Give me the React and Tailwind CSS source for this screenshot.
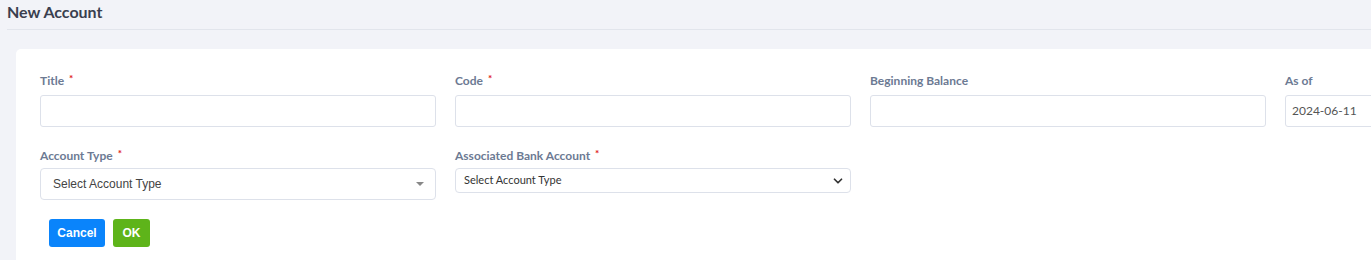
import { ChevronDown } from 'lucide-react';

const Label = ({ children, required }) => (
  <label className="flex items-start h-[18px] text-[12px] font-bold text-[#6c7a93] font-['Lato',sans-serif]">
    {children}
    {required && <span className="ml-[5px] text-[#e01515] text-[10px] leading-[12px]">*</span>}
  </label>
);

const TextInput = ({ value }) => (
  <div className="h-[32px] w-full border border-[#dde1ea] rounded-[3px] bg-white flex items-center px-[6px] text-[12px] text-[#555] font-['Lato',sans-serif]">
    {value}
  </div>
);

const App = () => {
  return (
    <div className="w-screen h-[260px] overflow-hidden bg-[#f2f3f8]">
      <div className="pl-[7px]">
        {/* Header */}
        <div className="h-[30px] pt-[1px] border-b border-[#e2e5ec]">
          <h1 className="text-[16px] leading-[22px] font-bold text-[#3a3f4f] font-['Lato',sans-serif]">New Account</h1>
        </div>

        {/* Card */}
        <div className="mt-[19px] ml-[9px] w-[1700px] bg-white rounded-[5px] pt-[23px] pl-[24px] pb-6">
          <div className="grid grid-cols-[repeat(4,396px)] gap-x-[19px]">
            <div>
              <Label required>Title</Label>
              <div className="mt-[5px]"><TextInput /></div>
            </div>
            <div>
              <Label required>Code</Label>
              <div className="mt-[5px]"><TextInput /></div>
            </div>
            <div>
              <Label>Beginning Balance</Label>
              <div className="mt-[5px]"><TextInput /></div>
            </div>
            <div>
              <Label>As of</Label>
              <div className="mt-[5px]"><TextInput value="2024-06-11" /></div>
            </div>
          </div>

          <div className="grid grid-cols-[repeat(4,396px)] gap-x-[19px] mt-[20px]">
            <div>
              <Label required>Account Type</Label>
              <div className="mt-[3px] h-[32px] border border-[#dde1ea] rounded-[4px] flex items-center justify-between pl-[12px] pr-[11px] text-[12px] text-[#444] font-['Liberation_Sans',Arial,sans-serif]">
                <span>Select Account Type</span>
                <span className="w-0 h-0 border-l-[4px] border-r-[4px] border-t-[4px] border-l-transparent border-r-transparent border-t-[#888]"></span>
              </div>
            </div>
            <div>
              <Label required>Associated Bank Account</Label>
              <div className="mt-[3px] h-[25px] border border-[#dde1ea] rounded-[4px] flex items-center justify-between pl-[8px] pr-[5px] text-[11px] text-[#333] font-['Lato',sans-serif]">
                <span>Select Account Type</span>
                <ChevronDown size={14} strokeWidth={3} className="text-[#333]" />
              </div>
            </div>
          </div>

          <div className="flex gap-[8px] mt-[19px] ml-[9px]">
            <button className="h-[28px] w-[56px] rounded-[3px] bg-[#0a84fb] text-white text-[12px] font-bold font-['Liberation_Sans',Arial,sans-serif]">
              Cancel
            </button>
            <button className="h-[28px] w-[37px] rounded-[3px] bg-[#5eb41a] text-white text-[12px] font-bold font-['Liberation_Sans',Arial,sans-serif]">
              OK
            </button>
          </div>
        </div>
      </div>
    </div>
  );
};

export default App;
